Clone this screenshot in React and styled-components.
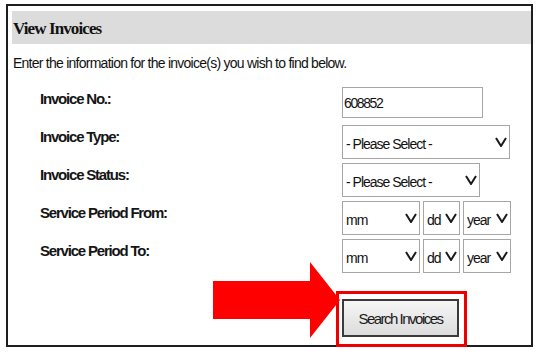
import React from "react";
import styled, { createGlobalStyle } from "styled-components";

const GlobalStyle = createGlobalStyle`
  html, body { margin: 0; padding: 0; background: #ffffff; }
  body { font-family: "Liberation Sans", Arial, sans-serif; color: #111; }
`;

const Frame = styled.div`
  position: relative;
  box-sizing: border-box;
  margin: 4px 0 0 6px;
  width: 527px;
  height: 343px;
  border: 2px solid #1e1e1e;
  background: #fff;
`;

const Header = styled.div`
  margin: 5px 0 0 4px;
  height: 33px;
  line-height: 36px;
  padding-left: 1px;
  background: #dcdcdc;
  font-family: "Liberation Serif", "Times New Roman", serif;
  font-weight: bold;
  font-size: 17px;
  letter-spacing: -0.9px;
  color: #111;
`;

const Intro = styled.p`
  margin: 11px 0 0 5px;
  font-size: 14px;
  line-height: 16px;
  letter-spacing: -0.75px;
  color: #111;
`;

const Form = styled.div`
  display: grid;
  grid-template-columns: 302px 1fr;
  grid-auto-rows: 34px;
  row-gap: 4px;
  margin: 16px 0 0 32px;
`;

const Label = styled.div`
  padding-top: 3px;
  font-weight: bold;
  font-size: 15px;
  line-height: 18px;
  letter-spacing: -1.2px;
  color: #151515;
`;

const Controls = styled.div`
  display: flex;
  gap: 3px;
  align-items: flex-start;
`;

const TextInput = styled.input`
  box-sizing: border-box;
  width: 141px;
  height: 31px;
  padding: 0 1px;
  border: 1px solid #a6a6a6;
  font-family: inherit;
  font-size: 14px;
  letter-spacing: -1.4px;
  color: #111;
  outline: none;
`;

const SelectWrap = styled.div`
  position: relative;
  width: ${(p) => p.$w}px;
  height: 34px;
`;

const Select = styled.select`
  appearance: none;
  box-sizing: border-box;
  width: 100%;
  height: 100%;
  padding: 3px 0 0 3px;
  border: 1px solid #a6a6a6;
  border-radius: 0;
  background: #fff;
  font-family: inherit;
  font-size: 14px;
  letter-spacing: -1px;
  color: #111;
  outline: none;
`;

const Chevron = styled.svg`
  position: absolute;
  right: 3px;
  top: 12px;
  width: 12px;
  height: 10px;
  pointer-events: none;
`;

const ButtonCell = styled.div`
  grid-column: 2;
  margin: 14px 0 0 -6px;
`;

const Highlight = styled.div`
  display: inline-block;
  box-sizing: border-box;
  width: 131px;
  height: 56px;
  padding: 5px 0 0 3px;
  border: 3px solid #ee0000;
`;

const SearchButton = styled.button`
  box-sizing: border-box;
  width: 117px;
  height: 38px;
  border: 2px solid #3a3a3a;
  background: linear-gradient(#f6f6f6, #dcdcdc);
  font-family: inherit;
  font-size: 15px;
  letter-spacing: -1.5px;
  color: #1a1a1a;
  padding: 0;
`;

const Arrow = styled.svg`
  position: absolute;
  left: 205px;
  top: 256px;
  width: 128px;
  height: 77px;
`;

function Dropdown({ width, children }) {
  return (
    <SelectWrap $w={width}>
      <Select defaultValue="">{children}</Select>
      <Chevron viewBox="0 0 12 10">
        <polyline points="1,1 6,9 11,1" fill="none" stroke="#1a1a1a" strokeWidth="2" />
      </Chevron>
    </SelectWrap>
  );
}

export default function App() {
  return (
    <>
      <GlobalStyle />
      <Frame>
        <Header>View Invoices</Header>
        <Intro>Enter the information for the invoice(s) you wish to find below.</Intro>
        <Form>
          <Label>Invoice No.:</Label>
          <Controls>
            <TextInput defaultValue="608852" />
          </Controls>

          <Label>Invoice Type:</Label>
          <Controls>
            <Dropdown width={168}>
              <option value="">- Please Select -</option>
            </Dropdown>
          </Controls>

          <Label>Invoice Status:</Label>
          <Controls>
            <Dropdown width={138}>
              <option value="">- Please Select -</option>
            </Dropdown>
          </Controls>

          <Label>Service Period From:</Label>
          <Controls>
            <Dropdown width={78}><option value="">mm</option></Dropdown>
            <Dropdown width={37}><option value="">dd</option></Dropdown>
            <Dropdown width={48}><option value="">year</option></Dropdown>
          </Controls>

          <Label>Service Period To:</Label>
          <Controls>
            <Dropdown width={78}><option value="">mm</option></Dropdown>
            <Dropdown width={37}><option value="">dd</option></Dropdown>
            <Dropdown width={48}><option value="">year</option></Dropdown>
          </Controls>

          <ButtonCell>
            <Highlight>
              <SearchButton type="button">Search Invoices</SearchButton>
            </Highlight>
          </ButtonCell>
        </Form>
        <Arrow viewBox="0 0 128 77">
          <polygon points="0,19 97,19 97,0 127,38 97,76 97,57 0,57" fill="#ff0000" />
        </Arrow>
      </Frame>
    </>
  );
}
